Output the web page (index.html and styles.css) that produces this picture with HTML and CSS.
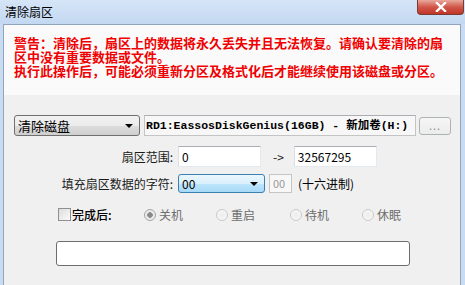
FILE: index.html
```html
<!DOCTYPE html>
<html>
<head>
<meta charset="utf-8">
<title>清除扇区</title>
<link rel="stylesheet" href="styles.css">
</head>
<body>
    <div class="window">
        <div class="titlebar">
            <span class="title">清除扇区</span>
            <div class="close-btn">
                <svg width="14" height="10" viewBox="0 0 14 10">
                    <path d="M3 1 L11 9 M11 1 L3 9" stroke="#fff" stroke-width="2.4" stroke-linecap="square"/>
                </svg>
            </div>
        </div>
        <div class="content">
            <div class="warning">
                <div class="warn-line">警告：清除后，扇区上的数据将永久丢失并且无法恢复。请确认要清除的扇</div>
                <div class="warn-line">区中没有重要数据或文件。</div>
                <div class="warn-line">执行此操作后，可能必须重新分区及格式化后才能继续使用该磁盘或分区。</div>
            </div>

            <div class="disk-row">
                <div class="combo combo-grey mode-combo">
                    <span>清除磁盘</span>
                    <span class="arrow"></span>
                </div>
                <div class="disk-edit">RD1:EassosDiskGenius(16GB) - 新加卷(H:)</div>
                <div class="dots-btn">...</div>
            </div>

            <div class="field-row range-row">
                <label class="field-label">扇区范围:</label>
                <div class="edit edit-range">0</div>
                <span class="to">-&gt;</span>
                <div class="edit edit-range">32567295</div>
            </div>

            <div class="field-row fill-row">
                <label class="field-label">填充扇区数据的字符:</label>
                <div class="combo combo-blue fill-combo">
                    <span>00</span>
                    <span class="arrow"></span>
                </div>
                <div class="edit edit-hex">00</div>
                <span class="hex-note">(十六进制)</span>
            </div>

            <div class="after-row">
                <span class="check"></span>
                <span class="after-label">完成后:</span>
                <span class="radio checked"></span><span class="radio-text r1">关机</span>
                <span class="radio"></span><span class="radio-text r2">重启</span>
                <span class="radio"></span><span class="radio-text r3">待机</span>
                <span class="radio"></span><span class="radio-text">休眠</span>
            </div>

            <div class="progress"></div>
        </div>
    </div>
</body>
</html>
```

FILE: styles.css
```css
body {
    margin: 0;
    width: 465px;
    height: 285px;
    overflow: hidden;
    font-family: "Noto Sans CJK SC", "Liberation Sans", sans-serif;
    font-size: 12px;
    color: #000;
}
.window {
    width: 465px;
    height: 285px;
    background: #c9dcf2;
    display: flex;
    flex-direction: column;
    padding: 0 4px 0 3px;
    box-sizing: border-box;
}
.titlebar {
    height: 24px;
    display: flex;
    align-items: flex-start;
    justify-content: space-between;
    background: linear-gradient(#d6e5f7, #c3d8f1);
    margin: 0 -4px 0 -3px;
    padding: 0 1px 0 5px;
}
.title {
    font-size: 12px;
    line-height: 24px;
    color: #000;
}
.close-btn {
    width: 47px;
    height: 15px;
    border: 1px solid #7a3b35;
    border-top: none;
    border-radius: 0 0 4px 4px;
    background: linear-gradient(#e9a99b, #d0574a 50%, #c03625);
    display: flex;
    align-items: center;
    justify-content: center;
    box-sizing: border-box;
}
.content {
    flex: 1;
    background: #f0f0f0;
    border: 1px solid #8ea4bf;
    border-bottom: none;
}
.warning {
    background: #fafafa;
    padding: 11px 0 17px 10px;
    height: 42px;
    color: #f00000;
    font-weight: bold;
    font-size: 13px;
    white-space: nowrap;
}
.warn-line {
    height: 14px;
    line-height: 14px;
}
.disk-row {
    display: flex;
    align-items: flex-start;
    margin: 20px 0 0 10px;
    height: 21px;
}
.combo {
    display: flex;
    align-items: center;
    justify-content: space-between;
    box-sizing: border-box;
    border-radius: 3px;
    padding: 0 6px 0 3px;
}
.combo-grey {
    border: 1px solid #707070;
    background: linear-gradient(#f2f2f2, #ebebeb 50%, #dddddd 51%, #cfcfcf);
}
.combo-blue {
    border: 1px solid #3c7fb1;
    background: linear-gradient(#eaf6fd, #d9f0fc 50%, #bee6fd 51%, #a7d9f5);
}
.arrow {
    width: 0;
    height: 0;
    border-left: 4px solid transparent;
    border-right: 4px solid transparent;
    border-top: 4px solid #000;
    margin-top: 1px;
}
.mode-combo {
    width: 126px;
    height: 21px;
    font-size: 13px;
}
.disk-edit {
    margin-left: 4px;
    width: 272px;
    height: 21px;
    box-sizing: border-box;
    border: 1px solid #c4c4c4;
    border-top-color: #abadb3;
    background: #f7f7f7;
    font-family: "Liberation Mono", "Noto Sans CJK SC", monospace;
    font-weight: bold;
    font-size: 11.5px;
    line-height: 19px;
    padding-left: 1px;
    white-space: nowrap;
    overflow: hidden;
}
.dots-btn {
    margin: 2px 0 0 3px;
    width: 32px;
    height: 18px;
    box-sizing: border-box;
    border: 1px solid #adb2b5;
    border-radius: 3px;
    background: linear-gradient(#f6f6f6, #ececec);
    color: #8c8c8c;
    font-size: 11px;
    line-height: 14px;
    text-align: center;
    letter-spacing: 1px;
}
.field-row {
    display: flex;
    align-items: center;
}
.field-label {
    width: 159px;
    text-align: right;
    margin-right: 5px;
    color: #1a1a1a;
}
.range-row {
    margin: 10px 0 0 10px;
    height: 21px;
}
.edit {
    box-sizing: border-box;
    background: #fff;
    border: 1px solid #e3e9ef;
    border-top-color: #abadb3;
    border-left-color: #dbdfe6;
    padding-left: 3px;
    line-height: 19px;
}
.edit-range {
    width: 83px;
    height: 21px;
}
.to {
    margin: 0 10px 0 12px;
    color: #1a1a1a;
}
.fill-row {
    margin: 7px 0 0 10px;
    height: 19px;
}
.fill-combo {
    width: 87px;
    height: 19px;
}
.edit-hex {
    margin-left: 4px;
    width: 23px;
    height: 19px;
    line-height: 17px;
    color: #9a9a9a;
    font-size: 11px;
    border-color: #c5c5c5;
    background: #f7f7f7;
}
.hex-note {
    margin-left: 6px;
}
.after-row {
    display: flex;
    align-items: center;
    margin: 15px 0 0 54px;
    height: 13px;
}
.check {
    width: 13px;
    height: 13px;
    box-sizing: border-box;
    border: 1px solid #8f8f8f;
    background: linear-gradient(135deg, #dcdcdc, #fbfbfb);
    margin-right: 1px;
}
.after-label {
    width: 72px;
    font-weight: 500;
}
.radio {
    width: 12px;
    height: 12px;
    box-sizing: border-box;
    border-radius: 50%;
    border: 1px solid #c9c9c9;
    background: radial-gradient(circle, #ececec, #fafafa);
    margin-right: 3px;
}
.radio.checked {
    background: radial-gradient(circle, #8a8a8a 0 2.5px, #e6e6e6 3px, #f6f6f6);
    border-color: #a5a5a5;
}
.radio-text {
    color: #6d6d6d;
    width: 57px;
}
.r2 {
    width: 59px;
}
.r3 {
    width: 57px;
}
.progress {
    margin: 20px 0 0 52px;
    width: 354px;
    height: 25px;
    box-sizing: border-box;
    border: 1px solid #6d6d6d;
    border-radius: 3px;
    background: #fff;
}
```
